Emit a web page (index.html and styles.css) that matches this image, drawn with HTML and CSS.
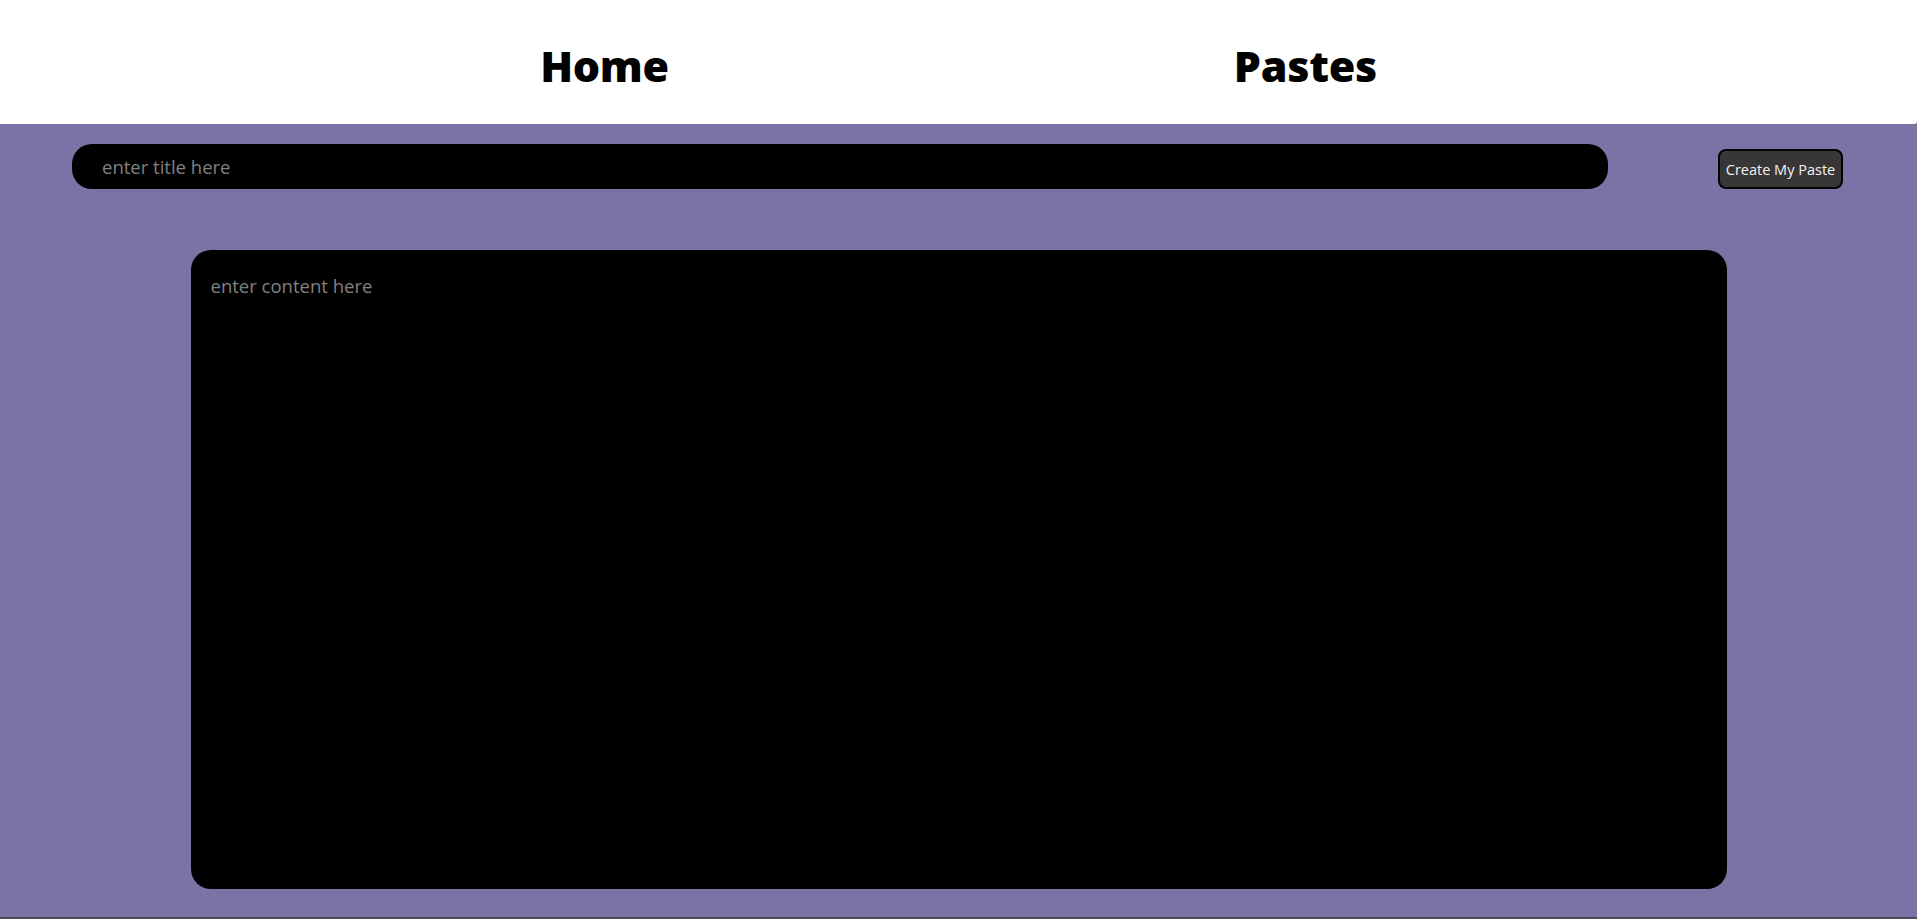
FILE: index.html
```html
<!DOCTYPE html>
<html>
<head>
<meta charset="utf-8">
<title>Paste App</title>
<link rel="stylesheet" href="styles.css">
</head>
<body>
<div class="page">
  <nav class="navbar">
    <a class="nav-link" href="#">Home</a>
    <a class="nav-link" href="#">Pastes</a>
  </nav>
  <main class="editor">
    <div class="title-row">
      <input class="title-input" type="text" placeholder="enter title here">
      <button class="create-btn">Create My Paste</button>
    </div>
    <textarea class="content-input" placeholder="enter content here"></textarea>
  </main>
</div>
</body>
</html>
```
FILE: styles.css
```css
html {
  background: #4d4a5a;
}
body {
  margin: 0;
  font-family: "Open Sans", "Noto Sans", sans-serif;
}
.page {
  height: 917px;
  background: #7b73a6;
  display: flex;
  flex-direction: column;
  overflow: hidden;
}
.navbar {
  height: 124px;
  background: #ffffff;
  display: flex;
  justify-content: center;
  align-items: center;
  gap: 565px;
  border-bottom-right-radius: 3px;
  flex-shrink: 0;
}
.nav-link {
  color: #000;
  text-decoration: none;
  font-weight: 800;
  font-size: 43px;
  line-height: 1;
  letter-spacing: -0.3px;
  padding-top: 6px;
}
.editor {
  display: flex;
  flex-direction: column;
  align-items: center;
}
.title-row {
  width: 100%;
  box-sizing: border-box;
  display: flex;
  align-items: flex-end;
  padding: 20px 0 0 72px;
  gap: 110px;
}
.title-input {
  width: 1536px;
  height: 45px;
  box-sizing: border-box;
  background: #000;
  border: none;
  border-radius: 20px;
  padding: 0 30px;
  color: #fff;
  font-family: "Open Sans", sans-serif;
  font-size: 18.5px;
  outline: none;
}
.title-input::placeholder,
.content-input::placeholder {
  color: #808080;
}
.create-btn {
  width: 125px;
  height: 40px;
  box-sizing: border-box;
  background: #383636;
  border: 2px solid #000;
  border-radius: 8px;
  color: #f2f2f2;
  font-family: "Open Sans", sans-serif;
  font-size: 14.5px;
  padding: 0;
  white-space: nowrap;
}
.content-input {
  margin-top: 61px;
  width: 1536px;
  height: 639px;
  box-sizing: border-box;
  background: #000;
  border: none;
  border-radius: 20px;
  padding: 23px 20px;
  color: #fff;
  font-family: "Open Sans", sans-serif;
  font-size: 18.5px;
  resize: none;
  outline: none;
}
```
